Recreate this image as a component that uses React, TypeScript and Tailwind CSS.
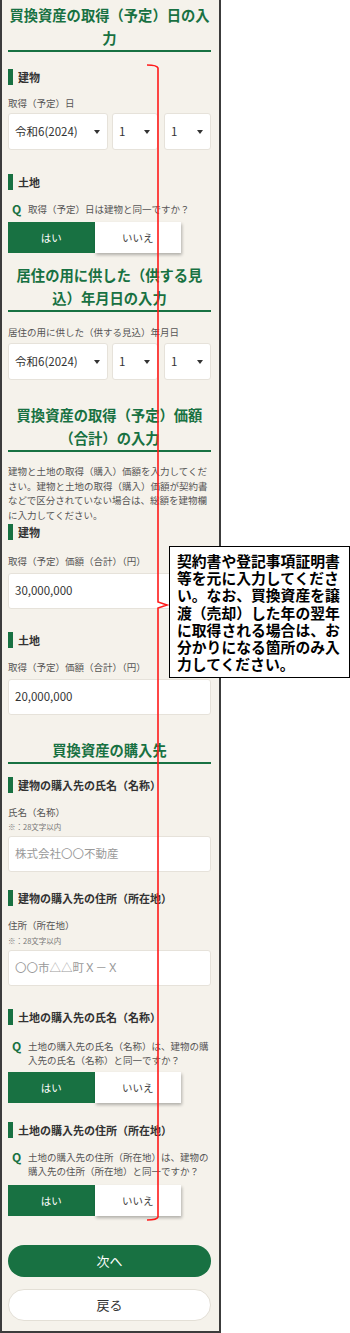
import type { ReactNode } from 'react';

const GREEN = 'bg-[#187142]';

function Heading({ children, className = '' }: { children: ReactNode; className?: string }) {
  return (
    <h2
      className={`text-center text-[14.3px] font-bold leading-[23px] text-[#187142] border-b-2 border-[#187142] pb-[1px] ${className}`}
    >
      {children}
    </h2>
  );
}

function Sub({ children, className = '' }: { children: ReactNode; className?: string }) {
  return (
    <div className={`flex items-center gap-[5px] h-[16px] ${className}`}>
      <span className={`w-[5px] h-[16px] ${GREEN}`} />
      <span className="text-[11px] font-bold leading-[16px] text-[#333]">{children}</span>
    </div>
  );
}

function Label({ children, className = '' }: { children: ReactNode; className?: string }) {
  return <p className={`text-[9.5px] leading-[14px] text-[#555] ${className}`}>{children}</p>;
}

function Note({ className = '' }: { className?: string }) {
  return <p className={`text-[7.5px] leading-[10px] text-[#777] ${className}`}>※：28文字以内</p>;
}

function Caret() {
  return (
    <span className="w-0 h-0 border-l-[3px] border-r-[3px] border-t-[4px] border-l-transparent border-r-transparent border-t-[#333]" />
  );
}

function Select({ value, className }: { value: string; className: string }) {
  return (
    <div
      className={`flex items-center justify-between h-[37px] pl-[6px] pr-[7px] bg-white border border-[#e6e2da] rounded-[3px] ${className}`}
    >
      <span className="text-[11.5px] text-[#333] leading-none">{value}</span>
      <Caret />
    </div>
  );
}

function DateRow({ className = '' }: { className?: string }) {
  return (
    <div className={`flex ${className}`}>
      <Select value="令和6(2024)" className="w-[100px]" />
      <Select value="1" className="w-[46px] ml-[4px]" />
      <Select value="1" className="w-[47px] ml-[6px]" />
    </div>
  );
}

function Input({ value, placeholder, className = '' }: { value?: string; placeholder?: boolean; className?: string }) {
  return (
    <div
      className={`flex items-center h-[36px] px-[6px] bg-white border border-[#e6e2da] rounded-[3px] text-[11.5px] leading-none ${
        placeholder ? 'text-[#999]' : 'text-[#333]'
      } ${className}`}
    >
      {value}
    </div>
  );
}

function Question({ children, className = '' }: { children: ReactNode; className?: string }) {
  return (
    <div className={`flex ${className}`}>
      <span className="w-[16px] ml-[4px] text-[12px] font-bold leading-[14px] text-[#187142]">Q</span>
      <p className="flex-1 text-[9.5px] leading-[14px] text-[#555]">{children}</p>
    </div>
  );
}

function YesNo({ className = '' }: { className?: string }) {
  return (
    <div className={`flex w-[173px] h-[31px] ${className}`}>
      <div className={`flex-1 flex items-center justify-center ${GREEN} text-white text-[10.5px]`}>はい</div>
      <div className="flex-1 flex items-center justify-center bg-white text-[#444] text-[10.5px] shadow-[1px_2px_3px_rgba(0,0,0,0.28)]">
        いいえ
      </div>
    </div>
  );
}

export default function App() {
  return (
    <div className="relative w-[350px] h-[1333px] bg-white font-['Noto_Sans_CJK_JP',sans-serif] overflow-hidden">
      <div className="w-[221px] h-[1333px] bg-[#f5f2eb] border-l-2 border-r-2 border-b-2 border-[#3c3c3c] pl-[6px] pr-[8px] pt-[3px]">
        <Heading>
          買換資産の取得（予定）日の入
          <br />
          力
        </Heading>

        <Sub className="mt-[17px]">建物</Sub>
        <Label className="mt-[11px]">取得（予定）日</Label>
        <DateRow className="mt-[3px]" />

        <Sub className="mt-[24px]">土地</Sub>
        <Question className="mt-[12px]">取得（予定）日は建物と同一ですか？</Question>
        <YesNo className="mt-[6px]" />

        <Heading className="mt-[10px]">
          居住の用に供した（供する見
          <br />
          込）年月日の入力
        </Heading>
        <Label className="mt-[13px]">居住の用に供した（供する見込）年月日</Label>
        <DateRow className="mt-[4px]" />

        <Heading className="mt-[23px]">
          買換資産の取得（予定）価額
          <br />
          （合計）の入力
        </Heading>
        <p className="mt-[12px] text-[9.5px] leading-[14.5px] text-[#555]">
          建物と土地の取得（購入）価額を入力してくだ
          <br />
          さい。建物と土地の取得（購入）価額が契約書
          <br />
          などで区分されていない場合は、総額を建物欄
          <br />
          に入力してください。
        </p>

        <Sub className="mt-[2px]">建物</Sub>
        <Label className="mt-[14px]">取得（予定）価額（合計）（円）</Label>
        <Input className="mt-[5px]" value="30,000,000" />

        <Sub className="mt-[23px]">土地</Sub>
        <Label className="mt-[12px]">取得（予定）価額（合計）（円）</Label>
        <Input className="mt-[5px]" value="20,000,000" />

        <Heading className="mt-[23px]">買換資産の購入先</Heading>

        <Sub className="mt-[13px]">建物の購入先の氏名（名称）</Sub>
        <Label className="mt-[12px]">氏名（名称）</Label>
        <Note className="mt-[3px]" />
        <Input className="mt-[4px]" value="株式会社〇〇不動産" placeholder />

        <Sub className="mt-[18px]">建物の購入先の住所（所在地）</Sub>
        <Label className="mt-[12px]">住所（所在地）</Label>
        <Note className="mt-[4px]" />
        <Input className="mt-[4px]" value="〇〇市△△町Ｘ－Ｘ" placeholder />

        <Sub className="mt-[23px]">土地の購入先の氏名（名称）</Sub>
        <Question className="mt-[14px]">土地の購入先の氏名（名称）は、建物の購入先の氏名（名称）と同一ですか？</Question>
        <YesNo className="mt-[5px]" />

        <Sub className="mt-[19px]">土地の購入先の住所（所在地）</Sub>
        <Question className="mt-[12px]">土地の購入先の住所（所在地）は、建物の購入先の住所（所在地）と同一ですか？</Question>
        <YesNo className="mt-[7px]" />

        <button className={`mt-[29px] w-full h-[32px] rounded-full ${GREEN} text-white text-[13px]`}>次へ</button>
        <button className="mt-[12px] w-full h-[32px] rounded-full bg-white border border-[#e3dfd6] text-[#333] text-[13px]">
          戻る
        </button>
      </div>

      {/* red bracket annotation */}
      <svg className="absolute left-[140px] top-[60px]" width="40" height="1170" viewBox="0 0 40 1170" fill="none">
        <path
          d="M7 5 Q17 5 18 8 V542 L27 545 L18 548 V1157 Q17 1160 7 1160"
          stroke="#ff1a1a"
          strokeWidth="1.6"
        />
      </svg>

      <div className="absolute left-[169px] top-[546px] w-[181px] h-[132px] bg-white border border-black pl-[7px] pt-[5px] text-[14.8px] font-bold leading-[17.2px] text-black whitespace-nowrap">
        契約書や登記事項証明書
        <br />
        等を元に入力してくださ
        <br />
        い。なお、買換資産を譲
        <br />
        渡（売却）した年の翌年
        <br />
        に取得される場合は、お
        <br />
        分かりになる箇所のみ入
        <br />
        力してください。
      </div>
    </div>
  );
}
